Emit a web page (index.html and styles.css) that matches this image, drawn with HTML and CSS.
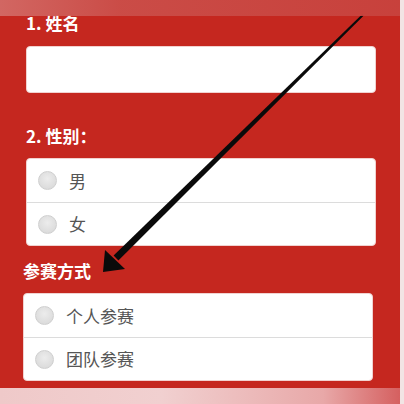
FILE: index.html
```html
<!DOCTYPE html>
<html>
<head>
<meta charset="utf-8">
<link rel="stylesheet" href="styles.css">
</head>
<body>
<div class="page">
  <div class="section">
    <div class="label">1. 姓名</div>
    <div class="input"></div>
  </div>
  <div class="section section-tight">
    <div class="label">2. 性别：</div>
    <div class="group">
      <div class="row"><span class="radio"></span><span class="opt">男</span></div>
      <div class="row row-next"><span class="radio"></span><span class="opt">女</span></div>
    </div>
  </div>
  <div class="section section-shift">
    <div class="label">参赛方式</div>
    <div class="group">
      <div class="row"><span class="radio"></span><span class="opt">个人参赛</span></div>
      <div class="row row-next"><span class="radio"></span><span class="opt">团队参赛</span></div>
    </div>
  </div>
  <svg class="arrow" width="404" height="404" viewBox="0 0 404 404">
    <polygon points="363.8,15.6 362.2,14.2 113.6,255.6 118.4,260.4" fill="#0a0a0a"/>
    <polygon points="103,272 105,250 125,269" fill="#0a0a0a"/>
  </svg>
  <div class="band-top"></div>
  <div class="band-bottom"></div>
</div>
</body>
</html>
```
FILE: styles.css
```css
html {
  background: #f2e4e4;
}
body {
  margin: 0;
  font-family: "Noto Sans CJK SC", "Noto Sans", sans-serif;
}
.page {
  position: relative;
  width: 400px;
  height: 404px;
  background: #c5271f;
  overflow: hidden;
  padding-top: 11px;
  box-sizing: border-box;
}
.section {
  margin-left: 26px;
  width: 350px;
  margin-bottom: 31px;
}
.section-tight {
  margin-bottom: 13px;
}
.section-shift {
  margin-left: 23px;
}
.label {
  color: #fff;
  font-weight: bold;
  font-size: 17px;
  line-height: 24px;
  height: 24px;
  margin-bottom: 11px;
}
.section + .section .label {
  margin-bottom: 10px;
}
.input {
  height: 45px;
  background: #fff;
  border: 1px solid #f1d2d0;
  border-radius: 4px;
}
.group {
  background: #fff;
  border: 1px solid #f1d2d0;
  border-radius: 4px;
}
.row {
  height: 43px;
  display: flex;
  align-items: center;
  padding-left: 11px;
}
.row-next {
  height: 42px;
  border-top: 1px solid #dcdcdc;
}
.radio {
  width: 17px;
  height: 17px;
  border-radius: 50%;
  background: radial-gradient(circle at 50% 40%, #ececec, #d6d6d6);
  border: 1px solid #cfcfcf;
  margin-right: 12px;
}
.opt {
  color: #555;
  font-size: 17px;
  line-height: 20px;
}
.arrow {
  position: absolute;
  left: 0;
  top: 0;
}
.band-top {
  position: absolute;
  left: 0;
  top: 0;
  width: 404px;
  height: 16px;
  background: linear-gradient(90deg, #d36c68 0%, #cb4f4a 30%, #c8433e 100%);
  opacity: 0.92;
}
.band-bottom {
  position: absolute;
  left: 0;
  top: 388px;
  width: 404px;
  height: 16px;
  background: linear-gradient(90deg, #efc9c9 0%, #f1d0d0 40%, #e8a8a8 80%, #d45c5c 100%);
}
```
